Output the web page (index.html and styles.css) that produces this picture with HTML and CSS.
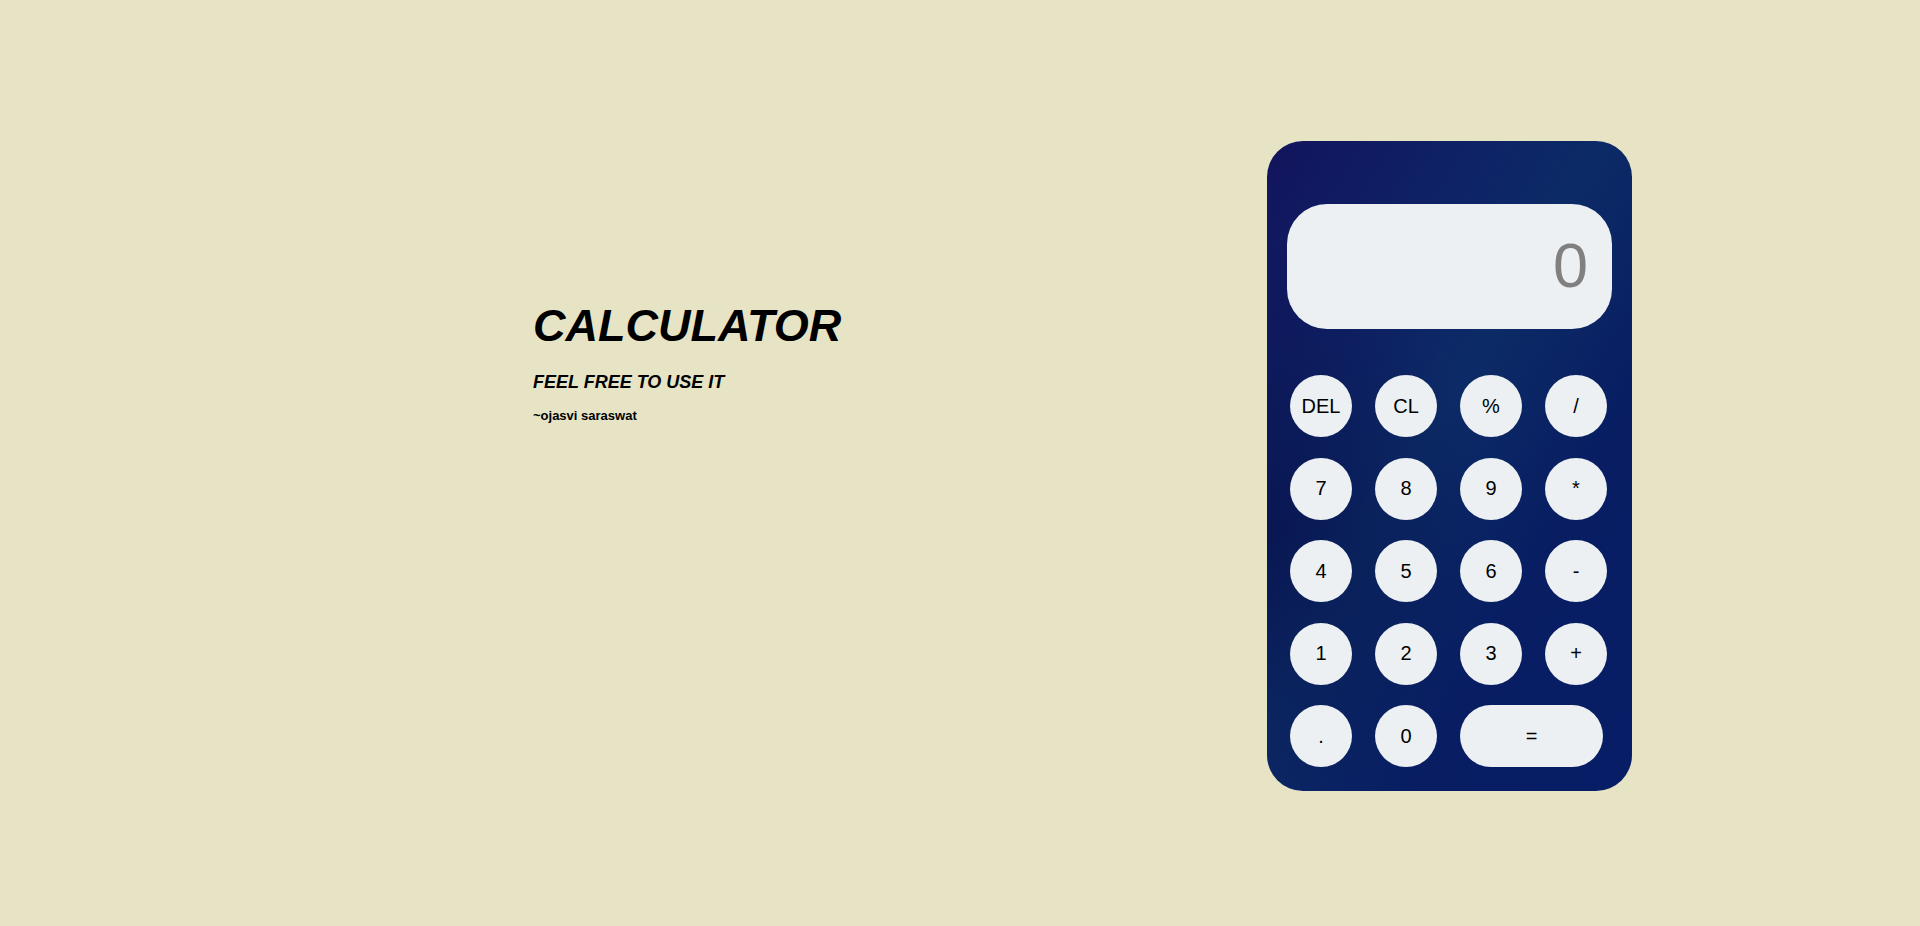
FILE: index.html
```html
<!DOCTYPE html>
<html lang="en">
<head>
<meta charset="utf-8">
<title>Calculator</title>
<link rel="stylesheet" href="styles.css">
</head>
<body>
<main class="page">
  <section class="intro">
    <h1 class="title">CALCULATOR</h1>
    <p class="tagline">FEEL FREE TO USE IT</p>
    <p class="author">~ojasvi saraswat</p>
  </section>
  <section class="calc">
    <div class="display">0</div>
    <div class="keys">
      <button class="key">DEL</button>
      <button class="key">CL</button>
      <button class="key">%</button>
      <button class="key">/</button>
      <button class="key">7</button>
      <button class="key">8</button>
      <button class="key">9</button>
      <button class="key">*</button>
      <button class="key">4</button>
      <button class="key">5</button>
      <button class="key">6</button>
      <button class="key">-</button>
      <button class="key">1</button>
      <button class="key">2</button>
      <button class="key">3</button>
      <button class="key">+</button>
      <button class="key">.</button>
      <button class="key">0</button>
      <button class="key key-wide">=</button>
    </div>
  </section>
</main>
</body>
</html>
```

FILE: styles.css
```css
* { box-sizing: border-box; }
html, body { margin: 0; padding: 0; }
body {
  background: #e6e4c5;
  font-family: "Liberation Sans", Arial, sans-serif;
  color: #000;
  overflow: hidden;
}
.page {
  display: flex;
  align-items: flex-start;
  height: 100vh;
  padding-left: 533px;
}
.intro {
  width: 734px;
  margin-top: 300px;
}
.title {
  margin: 0;
  font-size: 45px;
  line-height: 52px;
  font-weight: bold;
  font-style: italic;
}
.tagline {
  margin: 20px 0 0;
  font-size: 18px;
  line-height: 21px;
  font-weight: bold;
  font-style: italic;
}
.author {
  margin: 15px 0 0;
  font-size: 13px;
  line-height: 15px;
  font-weight: bold;
}
.calc {
  margin-top: 141px;
  width: 365px;
  height: 650px;
  border-radius: 36px;
  padding: 63px 20px 0;
  background:
    radial-gradient(ellipse 60% 45% at 0% 60%, rgba(5, 15, 70, 0.6), rgba(5, 15, 70, 0) 100%),
    linear-gradient(120deg, #12145c 0%, #0e2366 30%, #0c2b66 45%, #081d62 70%, #071d66 100%);
}
.display {
  height: 125px;
  border-radius: 40px;
  background: #ecf0f3;
  color: #808080;
  font-size: 63px;
  line-height: 123px;
  text-align: right;
  padding-right: 24px;
}
.keys {
  display: grid;
  grid-template-columns: repeat(4, 62px);
  grid-auto-rows: 62px;
  column-gap: 23px;
  row-gap: 20.5px;
  margin-top: 46px;
  padding-left: 3px;
}
.key {
  width: 62px;
  height: 62px;
  border: none;
  border-radius: 50%;
  background: #ecf0f3;
  color: #000;
  font-family: "Liberation Sans", Arial, sans-serif;
  font-size: 20px;
  padding: 0;
  cursor: pointer;
}
.key-wide {
  grid-column: span 2;
  width: 143px;
  border-radius: 31px;
}
```
